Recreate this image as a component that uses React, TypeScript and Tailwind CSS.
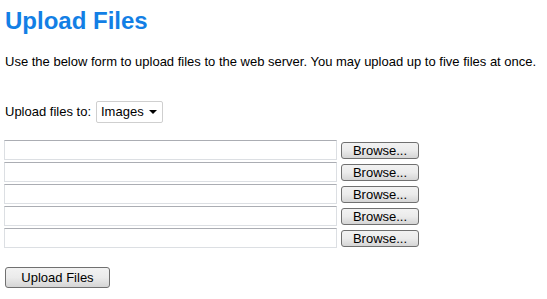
import { useState } from 'react';

const rows = [0, 1, 2, 3, 4];

export default function App() {
  const [folder, setFolder] = useState('Images');

  return (
    <div className="min-h-[299px] bg-white px-[5px] text-black font-['Liberation_Sans',Arial,sans-serif]">
      <h1 className="pt-[7px] text-[24px] leading-[28px] font-bold text-[#137fe5]">Upload Files</h1>
      <p className="mt-[19px] text-[13px] leading-[15px]">
        Use the below form to upload files to the web server. You may upload up to five files at once.
      </p>

      <div className="mt-[32px] flex items-center text-[13px]">
        <span className="mr-[5px]">Upload files to:</span>
        <div className="relative h-[22px] w-[67px] rounded-[2px] border border-[#cfcfcf] bg-white">
          <select
            value={folder}
            onChange={(e) => setFolder(e.target.value)}
            className="h-full w-full appearance-none bg-transparent pl-[4px] text-[13px] leading-[20px] outline-none"
          >
            <option>Images</option>
            <option>Documents</option>
            <option>Videos</option>
          </select>
          <span className="pointer-events-none absolute right-[5px] top-[8px] h-0 w-0 border-x-[4px] border-t-[4px] border-x-transparent border-t-black" />
        </div>
      </div>

      <div className="mt-[17px] -ml-[1px] flex flex-col gap-[2px]">
        {rows.map((i) => (
          <div key={i} className="flex items-center">
            <input
              type="text"
              className="h-[20px] w-[333px] border border-[#dcdfe3] border-t-[#abadb3] bg-white px-1 text-[13px] outline-none"
            />
            <button className="ml-[4px] h-[17px] w-[78px] rounded-[3px] border border-[#707070] bg-gradient-to-b from-[#f2f2f2] via-[#ebebeb] to-[#d5d5d5] text-[13px] leading-[15px]">
              Browse...
            </button>
          </div>
        ))}
      </div>

      <button className="mt-[19px] h-[21px] w-[105px] rounded-[3px] border border-[#707070] bg-gradient-to-b from-[#f2f2f2] via-[#ebebeb] to-[#d5d5d5] text-[13px] leading-[17px]">
        Upload Files
      </button>
    </div>
  );
}
